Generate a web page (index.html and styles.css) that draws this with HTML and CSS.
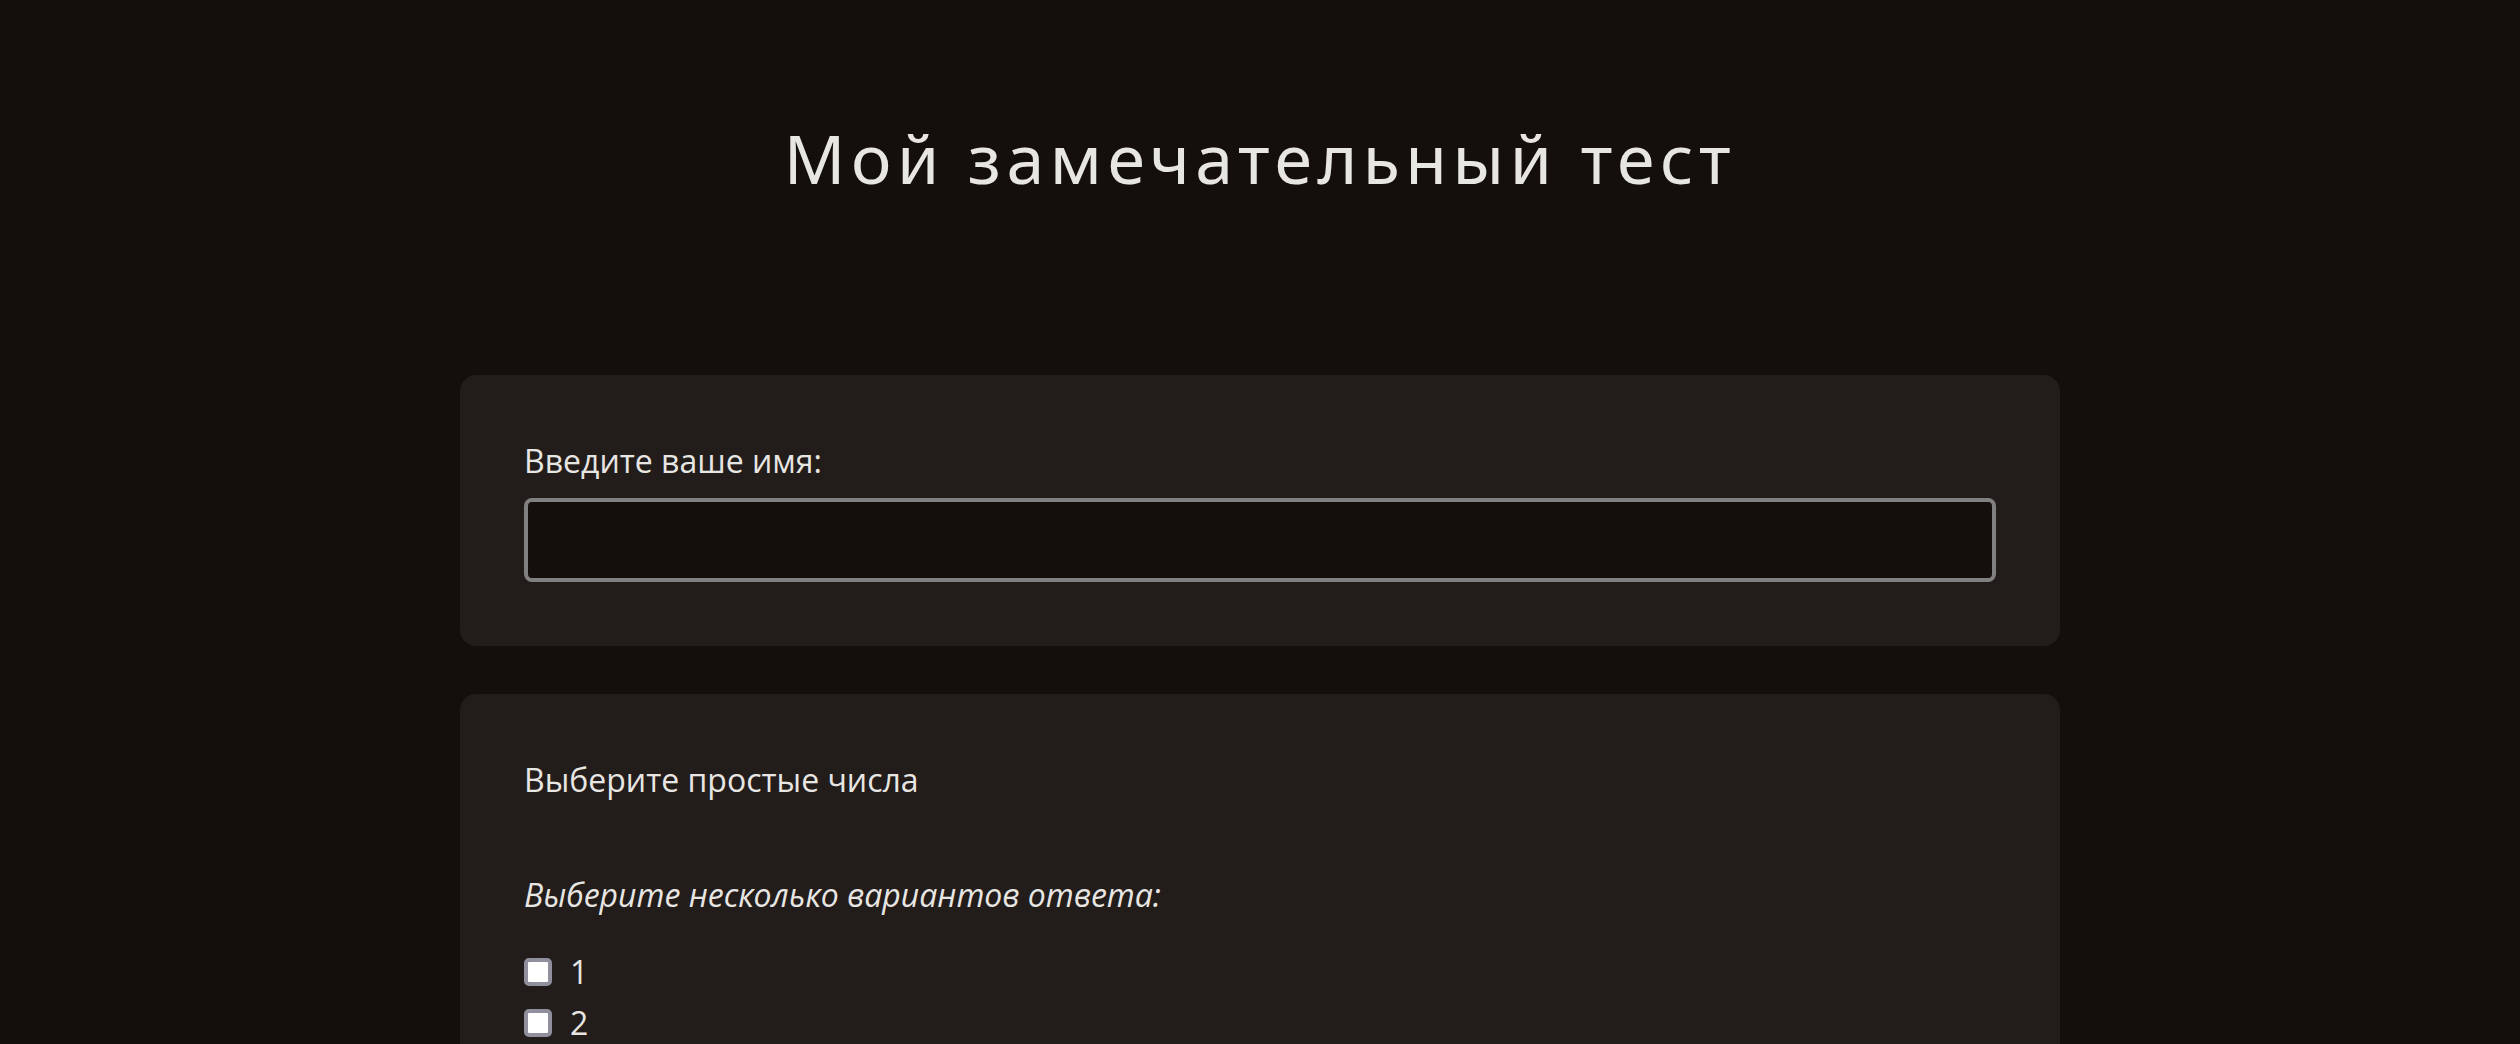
FILE: index.html
```html
<!DOCTYPE html>
<html lang="ru">
<head>
<meta charset="utf-8">
<title>Мой замечательный тест</title>
<link rel="stylesheet" href="styles.css">
</head>
<body>
<header class="header">
  <h1 class="title">Мой замечательный тест</h1>
</header>
<main class="quiz">
  <section class="card">
    <label class="label" for="name">Введите ваше имя:</label>
    <input class="text-input" id="name" type="text">
  </section>
  <section class="card">
    <p class="question">Выберите простые числа</p>
    <p class="hint">Выберите несколько вариантов ответа:</p>
    <div class="options">
      <label class="option"><input class="check" type="checkbox"><span>1</span></label>
      <label class="option"><input class="check" type="checkbox"><span>2</span></label>
      <label class="option"><input class="check" type="checkbox"><span>3</span></label>
      <label class="option"><input class="check" type="checkbox"><span>4</span></label>
    </div>
  </section>
</main>
</body>
</html>
```
FILE: styles.css
```css
html, body {
  margin: 0;
  padding: 0;
  background: #140e0c;
}
body {
  color: #e8e6e3;
  font-family: "Open Sans", "Noto Sans", sans-serif;
  font-size: 32px;
  line-height: normal;
}
.header {
  display: flex;
  justify-content: center;
  padding-top: 111px;
}
.title {
  margin: 0;
  font-family: "Noto Sans", "Open Sans", sans-serif;
  font-weight: 400;
  font-size: 68px;
  line-height: normal;
  letter-spacing: 5.5px;
  color: #e8e6e3;
}
.quiz {
  width: 1600px;
  margin: 171px auto 0;
  display: flex;
  flex-direction: column;
  gap: 48px;
}
.card {
  background: #221c1a;
  border-radius: 16px;
  padding: 64px;
  display: flex;
  flex-direction: column;
}
.label {
  display: block;
}
.text-input {
  margin-top: 16px;
  box-sizing: border-box;
  width: 100%;
  height: 84px;
  background: #140e0c;
  border: 4px solid #808080;
  border-radius: 8px;
  color: #e8e6e3;
  font: inherit;
  padding: 0 16px;
  outline: none;
}
.question {
  margin: 0;
}
.hint {
  margin: 72px 0 0;
  font-style: italic;
}
.options {
  margin-top: 34px;
  display: flex;
  flex-direction: column;
  gap: 8px;
}
.option {
  display: flex;
  align-items: center;
  gap: 18px;
}
.check {
  appearance: none;
  -webkit-appearance: none;
  margin: 0;
  box-sizing: border-box;
  width: 28px;
  height: 28px;
  background: #ffffff;
  border: 4px solid #8f8f9d;
  border-radius: 5px;
}
```
